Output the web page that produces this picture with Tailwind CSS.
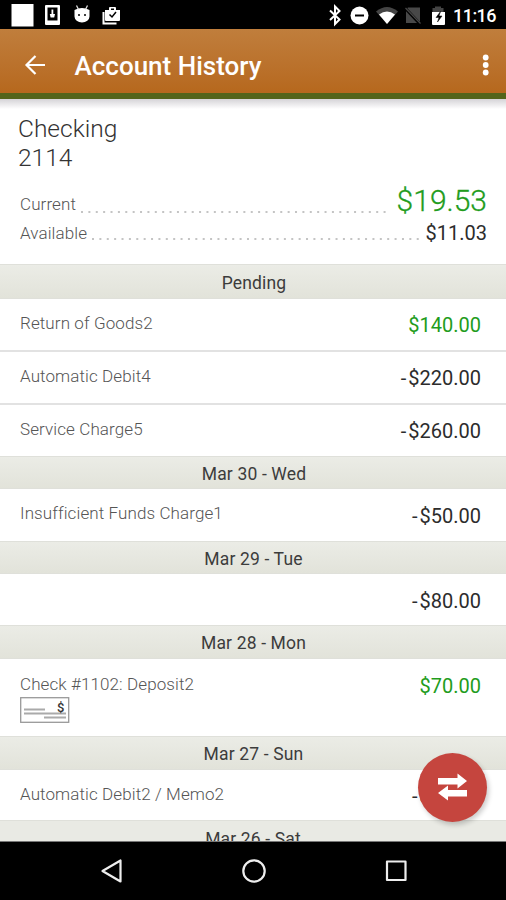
<!DOCTYPE html>
<html lang="en"><head><meta charset="utf-8"><title>Account History</title>
<script src="https://cdn.jsdelivr.net/npm/@tailwindcss/browser@4"></script></head>
<body class="bg-white">
<div class="relative flex h-[900px] w-[506px] flex-col overflow-hidden bg-white font-['Roboto','Noto_Sans',sans-serif] text-[#2c2c2c]">
<div class="flex h-[29px] shrink-0 bg-black">
<svg width="506" height="29" viewBox="0 0 506 29" fill="#fff">
<rect x="11.500" y="4" width="22" height="22.500"/>
<path fill-rule="evenodd" d="M46 5h13q1 0 1 1v18q0 1-1 1H46q-1 0-1-1V6q0-1 1-1zm1.500 2.500v13h10v-13z"/><path d="M51.500 9.500h1.800v4.500h1.700l-.8 3.500h-3.600l-.8-3.500h1.700z"/>
<path d="M74.500 10q7.500-4 15 0v6.500a7.500 6 0 0 1-15 0z"/><path d="M76.500 5.500l2 4M87.500 5.500l-2 4" stroke="#ddd" stroke-width="1.300"/><circle cx="79" cy="15" r="1" fill="#000"/><circle cx="85" cy="15" r="1" fill="#000"/>
<path fill-rule="evenodd" d="M106 10h3V8q0-1 1-1h5q1 0 1 1v2h4v10q0 1-1 1h-13q-1 0-1-1V10zm5 0h3V8.500h-3z"/><path d="M103.500 12v11.500h13" fill="none" stroke="#fff" stroke-width="2"/><path d="M109.500 14.500l2.500 2.500 4-5" fill="none" stroke="#000" stroke-width="1.500"/>
<path d="M330 10.500l9.500 9-4.500 4.500V6.500l4.500 4.500-9.500 9" fill="none" stroke="#fff" stroke-width="2"/>
<circle cx="359.500" cy="15.500" r="9"/><path d="M355 15.500h9" stroke="#000" stroke-width="2"/>
<path d="M376 11.500q11-9 22 0L387 24z" fill="#444"/><path d="M379 14.500q8-6 16 0L387 24z"/>
<path d="M408 7.500h12V23h-14V9.500z" fill="#484848"/><path d="M405 8l15 16" stroke="#000" stroke-width="3"/><path d="M405.500 8l15 15.500" stroke="#484848" stroke-width="1.200"/>
<path d="M435 6.500h6v1.500h2.500v5h-11V8h2.500z" fill="#444"/><path d="M432 12h13V24q0 1-1 1h-11q-1 0-1-1z"/><path d="M440.500 11.500l-4.500 6h3l-1.500 4.500 4.500-6h-3z" fill="#000" stroke="#000" stroke-width=".5"/>
<text x="453" y="22" textLength="43.500" font-size="18" font-weight="500">11:16</text>
</svg></div>
<header class="flex h-[70px] shrink-0 items-center border-b-[6px] border-[#53641a] bg-linear-to-b from-[#c07e3c] to-[#b6681d]">
<svg class="ml-[24px] mt-[7px] shrink-0" width="22" height="22" fill="none" stroke="#fff" stroke-width="2.200"><path d="M21 11H3M11.500 2L2.500 11l9 9"/></svg>
<h1 class="ml-[28.500px] mt-[9px] w-[379.500px] text-[26px] leading-[30px] font-medium text-white">Account History</h1>
<svg class="ml-[24px] mt-[7px] shrink-0" width="16" height="22" fill="#fff"><circle cx="7.700" cy="3.500" r="2.900"/><circle cx="7.700" cy="11" r="2.900"/><circle cx="7.700" cy="18.500" r="2.900"/></svg>
</header>
<section class="flex h-[165px] shrink-0 flex-col">
<div class="h-[10px] bg-linear-to-b from-[#d5d3d7] to-white"></div>
<div class="ml-[18px] mt-[6px] text-[24.500px] leading-[28.500px] font-light text-[#333]">Checking<br>2114</div>
<div class="mt-[13px] flex h-[32px] items-end pl-[20px] pr-[19px]"><span class="text-[17px] leading-[26px] font-light tracking-[0.1px] text-[#555]">Current</span>
<svg class="mb-[3px] ml-[5px] h-[4px] min-w-0 flex-1"><path d="M0 2H308" stroke="#c4c4c4" stroke-width="2" stroke-dasharray="2 5.380"/></svg>
<span class="ml-[7px] text-[30px] leading-[33px] text-[#229c1c] font-light [-webkit-text-stroke:0.3px_#229c1c]">$19.53</span></div>
<div class="flex h-[29px] items-end pl-[20px] pr-[19px]"><span class="text-[17px] leading-[26px] font-light tracking-[0.1px] text-[#555]">Available</span>
<svg class="mb-[5px] ml-[4px] h-[4px] min-w-0 flex-1"><path d="M1 2H330" stroke="#c4c4c4" stroke-width="2" stroke-dasharray="2 5.380"/></svg>
<span class="ml-[3px] text-[20px] leading-[26px]">$11.03</span></div>
</section>
<div class="flex h-[35px] shrink-0 items-center justify-center border-y border-[#dfe0da] bg-linear-to-b from-[#ebece6] to-[#e2e3da] text-[17.500px] pt-[4px] pl-[2px] tracking-[0.15px] text-[#3c3c3c]">Pending</div>
<div class="flex h-[53px] shrink-0 items-start justify-between border-b-2 border-[#e2e2e2] pl-[20px] pr-[25px]"><span class="mt-[12px] text-[17px] leading-[24px] font-light tracking-[0.1px] text-[#555]">Return of Goods2</span><span class="mt-[13px] text-[20px] leading-[26px] text-[#229c1c]">$140.00</span></div>
<div class="flex h-[53px] shrink-0 items-start justify-between border-b-2 border-[#e2e2e2] pl-[20px] pr-[25px]"><span class="mt-[12px] text-[17px] leading-[24px] font-light tracking-[0.1px] text-[#555]">Automatic Debit4</span><span class="mt-[13px] text-[20px] leading-[26px]"><span class="tracking-[2px]">-</span>$220.00</span></div>
<div class="flex h-[51px] shrink-0 items-start justify-between pl-[20px] pr-[25px]"><span class="mt-[12px] text-[17px] leading-[24px] font-light tracking-[0.1px] text-[#555]">Service Charge5</span><span class="mt-[13px] text-[20px] leading-[26px]"><span class="tracking-[2px]">-</span>$260.00</span></div>
<div class="flex h-[33px] shrink-0 items-center justify-center border-y border-[#dfe0da] bg-linear-to-b from-[#ebece6] to-[#e2e3da] text-[17.500px] pt-[4px] pl-[2px] tracking-[0.15px] text-[#3c3c3c]">Mar 30 - Wed</div>
<div class="flex h-[52px] shrink-0 items-start justify-between pl-[20px] pr-[25px]"><span class="mt-[12px] text-[17px] leading-[24px] font-light tracking-[0.1px] text-[#555]">Insufficient Funds Charge1</span><span class="mt-[14px] text-[20px] leading-[26px]"><span class="tracking-[2px]">-</span>$50.00</span></div>
<div class="flex h-[33px] shrink-0 items-center justify-center border-y border-[#dfe0da] bg-linear-to-b from-[#ebece6] to-[#e2e3da] text-[17.500px] pt-[4px] pl-[1px] tracking-[0.15px] text-[#3c3c3c]">Mar 29 - Tue</div>
<div class="flex h-[51px] shrink-0 items-start justify-end pr-[25px]"><span class="mt-[14px] text-[20px] leading-[26px]"><span class="tracking-[2px]">-</span>$80.00</span></div>
<div class="flex h-[34px] shrink-0 items-center justify-center border-y border-[#dfe0da] bg-linear-to-b from-[#ebece6] to-[#e2e3da] text-[17.500px] pt-[2px] pl-[1px] tracking-[0.15px] text-[#3c3c3c]">Mar 28 - Mon</div>
<div class="flex h-[77px] shrink-0 items-start justify-between pl-[20px] pr-[25px]"><div class="flex flex-col"><span class="mt-[13px] text-[17px] leading-[24px] font-light tracking-[0.1px] text-[#555]">Check #1102: Deposit2</span>
<svg class="mt-[1px]" width="50" height="26"><rect x=".7" y=".7" width="48" height="24.600" fill="#fff" stroke="#999" stroke-width="1.300"/><path d="M4 12.500h21M4 16.500h42M24 20.500h22" stroke="#aaa" stroke-width="2"/><text x="37" y="14.500" font-size="13" font-weight="500" fill="#333">$</text></svg></div><span class="mt-[14px] text-[20px] leading-[26px] text-[#229c1c]">$70.00</span></div>
<div class="flex h-[34px] shrink-0 items-center justify-center border-y border-[#dfe0da] bg-linear-to-b from-[#ebece6] to-[#e2e3da] text-[17.500px] pt-[3px] pl-[1px] tracking-[0.15px] text-[#3c3c3c]">Mar 27 - Sun</div>
<div class="flex h-[50px] shrink-0 items-start justify-between pl-[20px] pr-[25px]"><span class="mt-[12px] text-[17px] leading-[24px] font-light tracking-[0.1px] text-[#555]">Automatic Debit2 / Memo2</span><span class="mt-[13px] text-[20px] leading-[26px]"><span class="tracking-[2px]">-</span>$40.00</span></div>
<div class="flex h-[21px] shrink-0 items-start justify-center overflow-hidden border-t border-[#dfe0da] bg-[#e9eae4] text-[17.500px] tracking-[0.15px] text-[#3c3c3c]"><span class="mt-[5px] leading-[26px]">Mar 26 - Sat</span></div>
<nav class="h-[59px] shrink-0 border-t border-[#777] bg-black"><svg width="506" height="58" fill="none" stroke="#eee" stroke-width="2.200" stroke-linejoin="round"><path d="M120.500 18.500v21L102.500 29z"/><circle cx="254" cy="29" r="10.700"/><rect x="387" y="19.500" width="18.500" height="18.500"/></svg></nav>
<div class="absolute left-[418px] top-[753px] flex size-[69px] items-center justify-center rounded-full bg-[#c5453e] shadow-[2px_3px_5px_rgba(0,0,0,0.2)]"><svg width="69" height="69" fill="#fff"><path d="M20 25h19.500v-4.500l9.500 7.500-9.500 7.500V31.500H20zM49 43.500H30v4l-10-7.500 10-7.500V37h19z"/></svg></div>
</div></body></html>
